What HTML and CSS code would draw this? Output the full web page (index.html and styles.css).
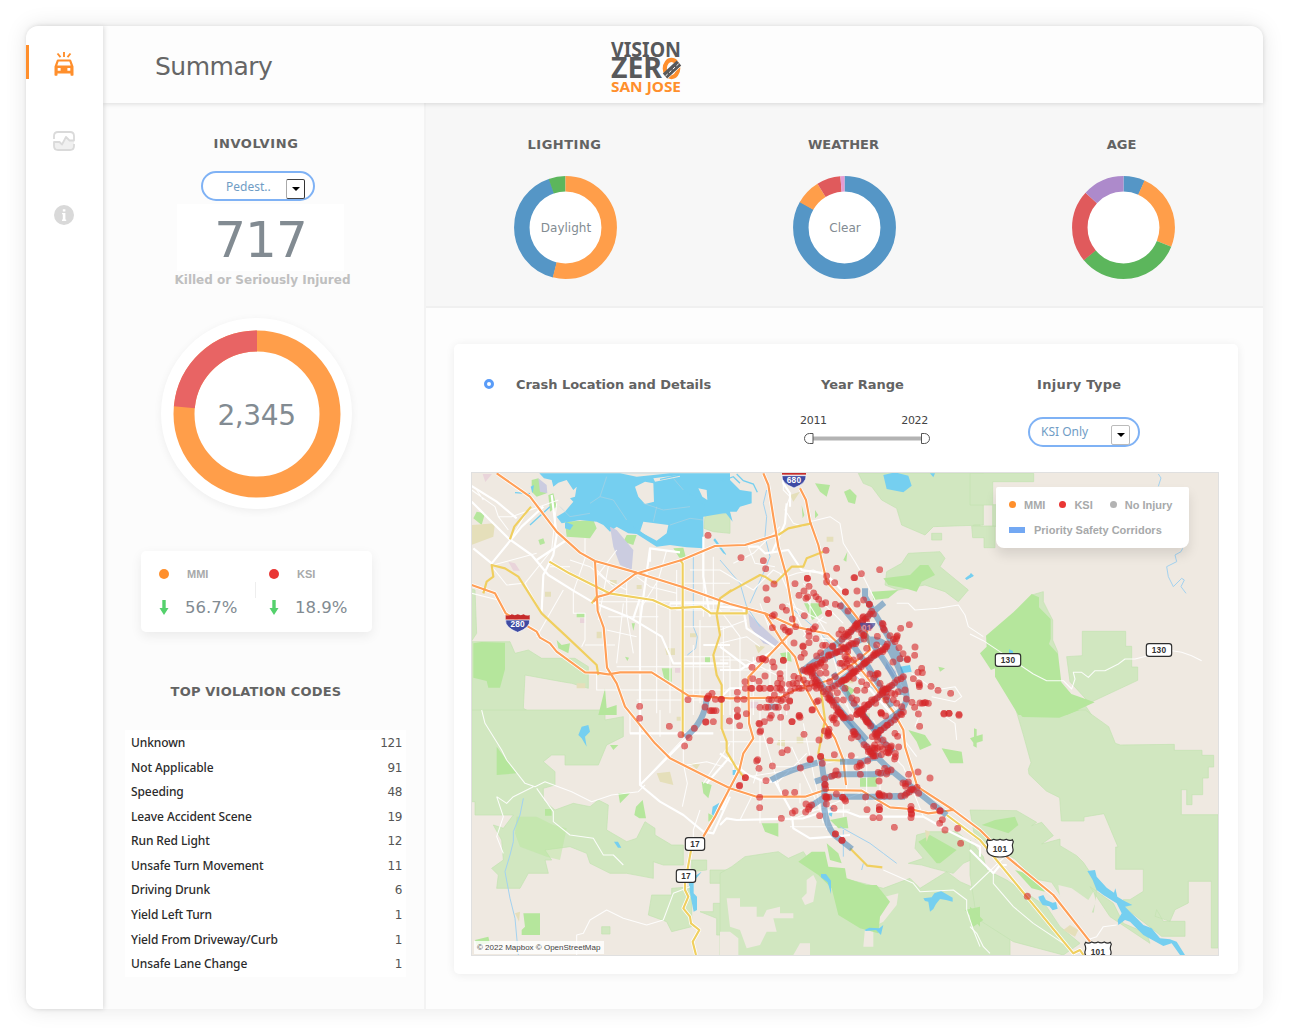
FILE: index.html
```html
<!DOCTYPE html>
<html lang="en">
<head>
<meta charset="utf-8">
<title>Vision Zero San Jose - Summary</title>
<link rel="stylesheet" href="styles.css">
</head>
<body>
<div class="app">
  <nav class="sidebar">
    <a class="nav-item active">
      <svg width="20" height="24" viewBox="0 0 20 24"><g fill="none" stroke="#ff8f2c" stroke-width="1.900"><path d="M10 0v5M3.500 1.500l3 3.600M16.500 1.500l-3 3.600"/></g><path fill="#ff8f2c" fill-rule="evenodd" d="M4 7.500h12q1 0 1.300 1l2.200 6V23q0 .7-.7.700h-1.600q-.7 0-.7-.7v-1.500h-13V23q0 .7-.7.700H1.200q-.7 0-.7-.7v-8.500l2.200-6Q3 7.500 4 7.500zm.6 2-1.300 4h13.400l-1.300-4zM3.700 16v2.800h2.900V16zm9.700 0v2.800h2.900V16z"/></svg>
    </a>
    <a class="nav-item chart">
      <svg width="22" height="20" viewBox="0 0 22 20"><path fill="#f0f0f0" d="M1 11h4.500l3.500 3 4.500-7 2.500 3h5v5q0 4-4 4H5q-4 0-4-4z"/><path fill="none" stroke="#dadada" stroke-width="1.800" stroke-linejoin="round" d="M1 8V5q0-4 4-4h12q4 0 4 4v4.500h-4.500L13 6l-4 7.500L6.500 11H1v4q0 4 4 4h12q4 0 4-4v-2"/></svg>
    </a>
    <a class="nav-item info">
      <svg width="20" height="20" viewBox="0 0 20 20"><circle cx="10" cy="10" r="10" fill="#d9d9d9"/><path fill="#fff" d="M8.800 4.200h2.600v2.300H8.800zM8 8h3.400v6.500h.8V16H8v-1.500h.8V9.300H8z"/></svg>
    </a>
  </nav>
  <div class="main">
    <header class="header">
      <h1>Summary</h1>
      <svg class="logo" width="70" height="52" viewBox="0 0 70 52">
        <g font-family="'Noto Sans',sans-serif" font-weight="700">
          <text x="0" y="16" font-size="20.500" fill="#58595b" textLength="70" lengthAdjust="spacingAndGlyphs">VISION</text>
          <text x="0" y="37" font-size="28" fill="#58595b" textLength="51" lengthAdjust="spacingAndGlyphs">ZER</text>
          <text x="0" y="50.500" font-size="15" fill="#ff8f2c" textLength="70" lengthAdjust="spacingAndGlyphs">SAN JOSE</text>
        </g>
        <ellipse cx="60.500" cy="27.500" rx="6.700" ry="8.600" fill="none" stroke="#ff8f2c" stroke-width="4.200"/>
        <path d="M53 33l14-13M57 37l12-11" stroke="#fff" stroke-width="1"/>
        <path d="M54 35l14-13" stroke="#58595b" stroke-width="6.500"/>
        <path d="M54.500 35l14-13" stroke="#fff" stroke-width="1" stroke-dasharray="3 2"/>
      </svg>
    </header>
    <div class="body">
      <aside class="left">
        <h2 class="involving">INVOLVING</h2>
        <div class="select pedest"><span>Pedest..</span><i class="drop dark"></i></div>
        <div class="big">717</div>
        <div class="sub">Killed or Seriously Injured</div>
        <div class="donut-big">
          <svg width="168" height="168" viewBox="-84 -84 168 168"><g transform="rotate(-90)" fill="none" stroke-width="21"><circle r="73" stroke="#ff9e4a"/><circle r="73" stroke="#e86464" pathLength="100" stroke-dasharray="23.500 76.500" stroke-dashoffset="-76.500"/></g></svg>
          <span>2,345</span>
        </div>
        <div class="rates">
          <div class="rate"><i class="dot mmi"></i><b>MMI</b><svg class="arrow" width="10" height="15" viewBox="0 0 10 15"><path fill="#54d16c" d="M3.300 0h3.400v8H9.500L5 15 .5 8h2.800z"/></svg><span>56.7%</span></div>
          <i class="split"></i>
          <div class="rate"><i class="dot ksi"></i><b>KSI</b><svg class="arrow" width="10" height="15" viewBox="0 0 10 15"><path fill="#54d16c" d="M3.300 0h3.400v8H9.500L5 15 .5 8h2.800z"/></svg><span>18.9%</span></div>
        </div>
        <h2 class="top-codes">TOP VIOLATION CODES</h2>
        <ul class="codes">
          <li><span>Unknown</span><em>121</em></li>
          <li><span>Not Applicable</span><em>91</em></li>
          <li><span>Speeding</span><em>48</em></li>
          <li><span>Leave Accident Scene</span><em>19</em></li>
          <li><span>Run Red Light</span><em>12</em></li>
          <li><span>Unsafe Turn Movement</span><em>11</em></li>
          <li><span>Driving Drunk</span><em>6</em></li>
          <li><span>Yield Left Turn</span><em>1</em></li>
          <li><span>Yield From Driveway/Curb</span><em>1</em></li>
          <li><span>Unsafe Lane Change</span><em>1</em></li>
        </ul>
      </aside>
      <section class="right">
        <div class="factors">
          <div class="factor"><h2 class="lighting">LIGHTING</h2>
            <div class="donut"><svg width="104" height="104" viewBox="-52.500 -52.500 104 104"><circle r="37" fill="#fff"/><g transform="rotate(-90)" fill="none" stroke-width="15.500"><circle r="43.700" stroke="#5596c6" pathLength="100" stroke-dasharray="41 59" stroke-dashoffset="-53.900"/><path d="M41.300-14.200A43.700 43.700 0 0 1 43.700 0" stroke="#5cb65c"/><circle r="43.700" stroke="#ff9e4a" pathLength="100" stroke-dasharray="54 46"/></g></svg><span>Daylight</span></div>
          </div>
          <div class="factor"><h2 class="weather">WEATHER</h2>
            <div class="donut"><svg width="104" height="104" viewBox="-52.500 -52.500 104 104"><circle r="37" fill="#fff"/><g transform="rotate(-90)" fill="none" stroke-width="15.500"><circle r="43.700" stroke="#5596c6" pathLength="100" stroke-dasharray="83.400 16.600"/><circle r="43.700" stroke="#ff9e4a" pathLength="100" stroke-dasharray="8 92" stroke-dashoffset="-83.200"/><circle r="43.700" stroke="#e05a5c" pathLength="100" stroke-dasharray="7.500 92.500" stroke-dashoffset="-91.200"/><circle r="43.700" stroke="#e59bd3" pathLength="100" stroke-dasharray="1.300 98.700" stroke-dashoffset="-98.700"/></g></svg><span>Clear</span></div>
          </div>
          <div class="factor"><h2 class="age">AGE</h2>
            <div class="donut"><svg width="104" height="104" viewBox="-52.500 -52.500 104 104"><circle r="37" fill="#fff"/><g transform="rotate(-90)" fill="none" stroke-width="15.500"><circle r="43.700" stroke="#5596c6" pathLength="100" stroke-dasharray="6.800 93.200"/><circle r="43.700" stroke="#ff9e4a" pathLength="100" stroke-dasharray="24.400 75.600" stroke-dashoffset="-6.700"/><circle r="43.700" stroke="#5cb65c" pathLength="100" stroke-dasharray="33 67" stroke-dashoffset="-31.100"/><circle r="43.700" stroke="#e05a5c" pathLength="100" stroke-dasharray="22.800 77.200" stroke-dashoffset="-64"/><circle r="43.700" stroke="#ad8acb" pathLength="100" stroke-dasharray="13.200 86.800" stroke-dashoffset="-86.800"/></g></svg></div>
          </div>
        </div>
        <div class="card">
          <div class="controls">
            <div class="ctl title"><i class="ring"></i><h3>Crash Location and Details</h3></div>
            <div class="ctl years"><h3>Year Range</h3>
              <div class="range-labels"><span>2011</span><span>2022</span></div>
              <svg width="126" height="12" viewBox="0 0 126 12"><path d="M8 5.500h110" stroke="#b3b3b3" stroke-width="4"/><path d="M9 .5v10H5.500a5 5 0 0 1 0-10zM117.500 .5v10h3a5 5 0 0 0 0-10z" fill="#fff" stroke="#555"/></svg>
            </div>
            <div class="ctl injury"><h3>Injury Type</h3><div class="select ksi-only"><span>KSI Only</span><i class="drop"></i></div></div>
          </div>
          <div class="map">
            <svg width="748" height="484" viewBox="3 6 2244 1452">
              <defs>
                <marker id="crash" markerUnits="userSpaceOnUse" markerWidth="22" markerHeight="22" refX="11" refY="11"><circle cx="11" cy="11" r="10.500" fill="#d62728" fill-opacity=".6"/></marker>
                <g id="shield101"><path d="M-37-25q8 5 18-1 10 5 19 0 10 5 19 0 10 6 18 1l3 6q-5 10-2 18 5 14-9 22-10 6-29 6t-29-6q-14-8-9-22 3-8-2-18z" fill="#fff" stroke="#2c2c2c" stroke-width="3.500"/><text class="route" y="12">101</text></g>
                <g id="box130"><rect x="-38" y="-19" width="76" height="38" rx="8" fill="#fff" stroke="#2c2c2c" stroke-width="3.500"/><text class="route" y="9">130</text></g>
                <g id="box17"><rect x="-29" y="-19" width="58" height="38" rx="8" fill="#fff" stroke="#2c2c2c" stroke-width="3.500"/><text class="route" y="9">17</text></g>
                <path id="freeways" d="M80 10L180 80 260 185 330 248 375 273 500 308 635 350 780 402 885 430 975 470 1075 492 1120 535 1190 620 1270 725 1300 780 1305 830 1330 910 1342 950 1450 1020 1530 1080 1610 1160 1750 1275 1860 1415M375 273L383 423 401 473 411 593 440 640 465 710 555 820 600 865 740 935 780 955 860 980 1005 980 1065 960 1175 962 1260 1012 1320 1017 1375 1030 1450 1020M5 345L75 370 107 430 200 485 210 503 240 520 260 545 345 607 380 608 415 613 450 607 545 607 655 677 780 685 930 683 975 660 1080 630 1150 580 1200 540 1190 480 1120 390 1070 335 1045 225 1020 155 1008 90 990 55M880 10L895 45 910 140 925 230 950 320 975 470M370 395L385 380 415 372 495 312 635 270 735 228 825 225 920 195M960 490L835 622 837 760 850 805 820 850 808 900 750 1010 735 1040 700 1100M885 430L940 520 975 560 1000 640 1050 735 1095 805 1120 870 1128 945"/>
              </defs>
              <rect width="2260" height="1470" fill="#efe9e1"/>
              <g class="park">
                <path d="M5 515h115l15 35 40-10 40 25 100 0 40 25 0 65-50-15-30-5-110-20-5 100 55 30-10 25H5zM0 355l15 5 5 130-20 30zM705 135l75-5v60l-50-5-28-10z"/>
                <g transform="translate(750)"><path d="M415 10l15 30 25 10 30 40 45 25 15 50 70 30 25-25 150-5V10zM760 165h20v35h-20zM635 190h30v20h-30zM500 305l45-25 20-30 95-5 15 20-15 25 85 70-30 35-40-30-60-20-80 15-40-15z"/></g>
                <g transform="translate(1500)"><path d="M0 10v95h68V35h123V10zM5 168h70v65H42v-30H8zM68 104h60v65H68zM290 560l47-3v-73h130v45h18v62h18v40L345 705l20 30H300l55-40-55-60zM185 375l35-10v30l15 30 13 25v60l15 35v60l-40-20z"/></g>
                <g transform="translate(0 720)"><path d="M5 0h400v30l55-10v60l-50 25-25 60H285v-30h-40l-25 20 35 30v40l-35 10v35l35 30 55-20 50 10 25-20 30 15-5 75 60 35 30-10 25-50 30 20v20l50 30 35 0v60h-60l-30-10v50l-80-15-50 0-60-30-10-30-50-20-75 10 20 30-20 0 10 40h-60l-25 45H80l5-40-20-20 35-25-5-60-25-45 30 10 30-40H15v-40H5zM545 555h60v-20l60-5v120l-60 15-15-30-55-20zM690 605h40v-25h50v-60h-60v-40h60v130l-20 20 0 45h-20v-50zM665 450l45 0 0 30-45 5zM395 650h25v22h-25z"/></g>
                <g transform="translate(750 720)"><path d="M0 490l35-20 40-30 100-15 30 20 45-20 40 60 200 50 80-30 30 30 80-50 40 30 80 35 50 20 20 30v160H0zM565 460l45-15-25-30 5-40 40-10 80 0 60 50 5 25-45 20-30 30-60-15-35-10z"/></g>
                <g transform="translate(1500 720)"><path d="M138 0h208l70 50 20 50 15 5 162-2v18h83v15h35v35h-16v33h-17v50h-32v30h-16v-45h-16v75h110v400h-20v-200H655v65l-40 20-15 35-45-15 5-20 20 35h65v45h-70l-25-20-90-70v-20h20l40-25V478H437v-67h7L402 311l-60 10v12h-68l-5-70-40-20-52-50-2-15 8-20-22-80zM0 300l140 2 60 35-15 10 30-10 35 40-35 25 55-15 0 20 50 30 20 20 20 30 20 50-10 70-85-30-40-60-50-10-60-60-70-40-50-20zM0 390l40 50 10 40 60 30 120 80 40 60 60 50-50 35-150-40-110-70-20-130zM360 530l70 50 30 60 70 30 10 30-120-80z"/></g>
              </g>
              <path class="land" transform="translate(750 720)" d="M260 510l20-15 10 20-10 60-25 10-10-20 15-15zM20 565h40v25h50v30h20l10-20 40-10v20l40 0v15h-60l10 40-30 0-20 40-40 10-20-55-30-10zM0 665l30 0 25 20v50H0zM440 600l55-40 40-10-5 35-40 50-30 15v60l-30 0zM240 700h30v35h-50z"/>
              <path class="land" transform="translate(1500 720)" d="M265 525l40 10 50 35 15-25 8 30-20 50-60-20-25-25z"/>
              <g class="meadow">
                <path d="M10 520l25-4 70 2v80l-15 55H55l-5-20-40-10zM185 30l20-5 25 45-30 10-15-15zM235 75l15-5 10 40-20 15zM285 155l85-5 10 25-20 30-70-5zM470 195l30 0-10 30-30-10zM610 235l30-2 8 30-20 0zM260 510l15 15 25-5-5 30-30-15zM320 430h25v12h-25zM575 595h30v40h-20zM385 735l20-80 5 60 30-10v30zM705 560l15 0v22l-15-5zM485 460l10 0-5 22zM20 125l25 5-10 35-25-20zM465 560l12 3-5 10zM205 210l15-5 5 15-15 5z"/>
                <g transform="translate(750)"><path d="M285 40l45 5-10 35-20-15zM372 65l18-8 20 20-5 25-20-5zM490 325l80-10 30-30 25 0 20 30-40 20-15 30-35-10-50-10zM455 365l80-5-30 25-45 5zM370 270l12-25-3 30zM245 105l8 30-5 10zM252 400l45 0 10 30-30 20zM180 550l30-5 5 30-25-5zM370 640l35 20-20 25zM655 590l20 5-15 10zM285 120l10 15-10 10z"/></g>
                <g transform="translate(1500)"><path d="M48 497l82-70 55-55 22 10 0 30 35 35 0 60-5 15 27 30 10 85 30 35 70 25L290 735H145L75 620v-25l-12 5-33-50 20-20z"/></g>
                <g transform="translate(0 720)"><path d="M80 110l60 80-60 5zM160 610h50v65h-55v-15l10-10zM445 250l35 0-30 30zM498 290l20-20 10 55-20 0-15-10zM695 215l30 10-10 40-15-15zM715 310l20 10-20 15zM15 690l40-10 5 20-40 5zM225 297h20v20h-20zM420 105l25 0-15 15z"/><path opacity=".45" d="M140 320l60 0 50 25 40 10-20 95-40-10-80-30-15-40z"/></g>
                <g transform="translate(750 720)"><path d="M235 455l40-30h40l10 45 50 5 5 30 60 20h30l40 50-30 45-5 50-55-15-65-40-20-80-40-40zM420 205l50-5v30h-50zM595 395l35-20 80 45-50 40-10 0zM565 60l50 15 20 30-35 15-10-25zM665 115l60 10 5 35-40 0zM330 330l50-10 5 35-30 0zM320 400l35 30 10 30-35-10zM125 340l50 0v40l-40-15zM735 600l45-10v60z"/></g>
                <g transform="translate(1500 720)"><path d="M138 0h190l-60 23-110-2zM35 345l40-15 60-10 10 25-30 25-60-20zM0 590l40 40-30 20-10-10zM0 85l12-5 0-25 8 3v20l18-5v20l-18 5v15l-10-5 0-10zM135 480l50 15 40 50-40-10z"/></g>
              </g>
              <path class="pink" d="M115 275l20 5 15 22-20 0zM38 12h28l-20 24zM330 445h14v14h-14zM615 594h16v14h-16zM840 695h25v20h-25z"/>
              <path class="sand" d="M5 165l70-5-5 40-65 25zM225 365h18v15h-18zM380 485h15v20h-15zM585 535l30 0 0 20-25 0zM320 640h26v15h-26zM960 75l30-10-20 30zM1070 200h20v15h-20zM925 810h20v20l-25-5zM855 525l30 5-20 20zM1130 620h20v20h-20zM560 910l40-5 10 40-40-10zM660 880l30 3-10 15zM1180 730h20v20h-20zM1365 1080l15 5-10 30zM1780 1380l20-15 25 15-10 20zM135 1330l15-5-3 30zM420 330h20v15h-20zM500 345h15v12h-15zM660 490h20v12h-20zM980 800h20v20h-20zM620 740h20v12h-20z"/>
              <g class="water">
                <path d="M208 10l14 15 23 5 5 20 15-12 25-8 20 30 10-10-5 30-15 5 10 10-25 30-25 15 15 20 55-10 50 5 20 10 20 20 20-15 35 20 25 2 20 13 40 25 40-5 50 7 50 3v-95l60-10 20-2V10zM182 50l10-5-4 25zM285 155l25 10-10 15-15-5z"/>
                <path d="M735 205l35 50-10-5-30-40z"/>
                <g transform="translate(750)"><path d="M0 25l30 5 30 30 35 5v35l-35 10-10 15H30l8 30-20-25H0zM490 15l35-8 40 10 10 30-25 20-50-10zM735 325l20-15 5 8-20 12zM540 590l30-5 5 20-30 5zM630 10h15l-5 12z"/></g>
                <path d="M1617 538l12 5v8l-12 0zM1500 310l12 7-12 7z"/>
                <g transform="translate(0 720)"><path d="M335 50l20-5 5 20-15 15 5 30-15-25-10-10zM432 395l12 0 10 18-10 0zM728 290l20-12-15 40-8-5zM655 510l40-25-24 30 0 35 10 10 0 40-10 5-10-50zM625 500l10 5-5 10z"/></g>
                <g transform="translate(750 720)"><path d="M303 492l15 0 15 20 0 40-10-35-20-15zM433 660l15-7 30 2 12-10-5 20-2 10-15-15-30 3zM610 565l25-3 8-12 20-7 35 20 0 12-20-5-18-3-12 15-8 15-10 8-5-30-10-2zM330 290l10 5-5 25-8-5zM38 180h15v15h-15z"/></g>
                <g transform="translate(1500 720)"><path d="M352 483l23-3 5 20 30 33 22 15 4-13 6 25 20 12 25 13-22 5 15 15 20 20 20 20 25 10 25 30 30 3 20 7 25 40h-15l-25-35-25 8-60-33-40-40-15-5-20 15-2-15 12-20-15-30-40-25-20-15-12-30zM205 560l15-5 8 15 20 8 10-2 5 20-15 5-10-12-20-4-10-15z"/></g>
              </g>
              <path class="land" d="M495 50l30-15 25 5 2 55-27 7-20-22zM520 155l75 10-5 25-30 22-50-27zM450 10l50 10 100-10zM550 25l80-10 0 5-75 15zM685 55l25 5 2 30-15-10z"/>
              <path d="M420 170l20 10 50 60-5 60-35-15-20-55zM205 25l25 20 2 25-22-5zM835 430l95 90-15 10-35-10-40-50zM1250 575l30 30-10 20-25-30z" fill="#cbcce0"/>
              <path d="M570 28l60-13M705 130l-5-30-60-40M530 200l-40-30M460 150l-8-25M135 68l45 3M180 165l60-55M750 35l40-15 20 20M800 12l20 20 30 10 12 25" fill="none" stroke="#75cff0" stroke-width="4"/>
              <path d="M360 100l30-20 40 10 40 60M520 100l60 20 80-10M640 60l-30-35M560 110l-10 45M600 165l60-20 40 5M390 80l20-60M270 110l30 30 60-10" fill="none" stroke="#bfd3dc" stroke-width="1.500"/>
              <g class="creek">
                <path d="M670 260v210l12 30-5 35-25 20M890 60l-10 40 10 40-5 60 15 60-20 50-40 90M750 270l60 70 20 70 40 60"/>
                <path d="M160 985l-10 50-20 50 0 30-10 40-15 50 15 80 15 60 10 110M1110 1070l90 50 40 30 40 30M1120 1080v80M1180 1180l-5 20M960 410l70 60 50 50 20 60 130 90M2065 12l8 12-8 25M2138 235l-5 10-18 10 5 20-30 15 5 30 15 30 25-25 8 5-10 20 15 20"/>
              </g>
              <g class="minor">
                <path d="M5 60l70 50M75 110l10 30 40 0 140-50M85 140l30 40M70 285l130-35M120 210l60-100M260 100l-15 140-80 100 50 90M345 205v60l-35 100v65h35v80l-10 20M380 300l30 30 60 30v40M415 290l-30 160M470 330v100l20 120M500 320l40 30 80 20M380 395h400M590 240l-25 90-50 80M345 525h90M380 600v60h400M440 590h340M500 690h280M415 440h150M460 400l-20 180M510 400v60M560 330v400M600 400v330M620 300v120h160M670 525v210M700 240v200M730 260v160M750 300h-90M640 340h140M640 470h150M690 450v250M760 470v265M640 560h140M410 480l90 20M440 240l-60 80M300 270l60 20 70 60M240 290l60 0M20 60l20 30M5 370l80 20M200 500l80-140M160 340l-50 5-40-50"/>
                <g transform="translate(750)"><path d="M190 10v50l20 20-15 40 25 40 30 10M85 230l20 50 60 10M0 300l100 60 60-60 40 20 30-10 50-10 60 30M180 170l-80 80-60 30M270 155l60-15 30 20 10 60 35 55 20 35 40 80M0 520l80-20 40 30M0 570h80l100 50M30 560v175M60 500v235M120 400l30 80M80 650h170M0 600h200M100 560v175M150 560v175M200 500v235M0 480l80-30M0 420l60 80M230 440l30 60 100 10M260 390l60 100M270 300v150M310 440l-60 60M200 400l120 60M250 340l120 120M330 530l60 200M430 570l110 165M480 540l100 165M300 600l100 135M530 400l35 0 20 20 70-5 60-10 20 30 10 35 45 30M575 610l70 50 60-10 20 30-20 15-70-15M180 310l60 130M290 460l30 80"/></g>
                <path d="M1500 492l40 20 90 60 60 40 40 20 50 0 25 25 10-30-5-20 25 0 20 15 20-20h30l40-20 20-15 30 0 60-15 20-15 60 10 30 10 30 15"/>
                <g transform="translate(0 720)"><path d="M35 0l10 40 50 80 15 30 55 70 30 10 30-15 80 30 60 30 60-20 80-10 20-20M200 235l50 70 0 30 50 40 70 10 30 50 30 0 30 30M510 225l150-160M480 0v70h150M570 0v80M640 100l0 60 12 60-15 70M650 165l60-10 50 15M780 100l-80 120M690 300l-20 60 0 60M780 230l-30 70-30 60M660 530l-50 20-30 80-50 15-70-20-50-25-50 30-20 40-20 5 0 60M80 260l30 20 20-20 60-30M80 260l20 60-20 60 20 50"/></g>
                <g transform="translate(750 720)"><path d="M40 0v180M120 0v160l-20 60M182 0v120M0 60h85M0 95h300M85 200l130-20 200-40M215 110l90 200M120 210v130M60 330l40-80M250 40l60 300M210 330l210-80M240 220v60M320 240v120M370 240v80M260 130l-90 90M380 140v100M440 120v160M480 220v110M420 80l30 50M500 120l50 50 60 150M530 60l60 80M120 40l60 200M490 480l90 40 20 25 100-5 40 30 0 30 20 60 20 50M605 0l-20 50M660 0l15 20 30 20 5 50M460 30l30 60 50 70M150 170h80M210 350h140M240 300h150"/></g>
                <g transform="translate(1500 720)"><path d="M0 540l115-110M70 490l0 30 60 70 60 50 90 60M350 690l30-10 20-30 40-5M0 650l20 20 20 40 20 20"/></g>
              </g>
              <g class="major">
                <path d="M5 95l60 60 50 50 70 50 50 60 80 50 60 35 100 40 100 60 35 80h165M10 235l55 45 90-110 65-60M245 75l15 120-10 60-30 60-5 110M510 735V455l30-220 90 12M540 235v40M700 525h80M700 200v120l20 120M600 400h160M510 385l-20 60M200 270l90-60M0 45l80 50 60 50"/>
                <g transform="translate(750)"><path d="M85 230l30 0 20 20 70-10 40 60 70 10 50 50M0 600h60l30-20M0 410l70 5 10 60 90 60M200 100l-5 60-40 90M0 685l30-30h200M210 110l0-40-20-30V10M180 530l-100 60-80-60M400 600l130 150"/></g>
                <g transform="translate(0 720)"><path d="M510 0v225l60 50 70 40 60 50 30 5 50-110M480 70h170l80 0M510 225l140-140M780 140l-70 80"/></g>
                <g transform="translate(750 720)"><path d="M0 345l20-20 30 5 200-5 60-20 70 0 40 15 100 0 90 0 70 40 100 50v30M0 130l85 65 50 20h30l50 90 5 50 50 30 70-5 50-5M5 300l60-150"/></g>
                <g transform="translate(1500 720)"><path d="M0 420l30 30 40 40 20-25 20 0"/></g>
              </g>
              <g class="casing">
                <use href="#freeways"/>
                <path d="M1430 1035L1530 1110 1810 1450 1830 1440 1840 1455M630 270l8 10V800M665 1130l-20 110 0 20 10 20-15 35 20 25 3 20 25 20-20 35 10 40M238 275l60 35 120 60 130 20 55 25 90-5 30 20h95"/>
              </g>
              <g class="highway yellow">
                <path d="M183 110l-50 60-13 38M238 275l60 35 120 60 130 20 55 25 90-5 30 20h95M40 370l10-35 20-15-5-35 40 10 40 25 70 110 75 70 90 85 5 30M630 270l8 10V800M365 400l15-20M785 360l-35 25-10 50 10 60-20 60 10 60 15 30v130l15 40 0 30 30 50 25 30M750 430h80v-20M750 385l30-20 90-50 15 5 30 20 50-50h35l10-25 50-20M925 195l30-20 70-15M1050 640l15 110-20 100 20 20 60 2M665 1130l-20 110 0 20 10 20-15 35 20 25 3 20 25 20-20 35 10 40M1140 1135l52 52 45 5M1430 1035L1530 1110 1810 1450 1830 1440 1840 1455"/>
              </g>
              <g class="highway"><use href="#freeways"/></g>
              <g class="corridor">
                <path d="M710 685q-5 70-65 118"/>
                <g transform="translate(750)"><path d="M435 355l0 25 70 120 40 75M493 398l-60 50-60 55-120 95M358 400l110 135 40 60 40 70 0 10M500 530L330 655M555 615L410 735M280 610l80 110 80 90M340 610l60 90 50 60 30 30M395 520l50 70 70 120M440 510q55-10 80 50 40 80 40 130-20 55-90 100M240 605l190-100M145 710h30"/></g>
                <g transform="translate(750 720)"><path d="M350 0l90 110 60 60 80 65 100 80M420 0l60 85 40 40M545 0l-80 60M153 210q50-30 140-52M303 145l10 70v80q5 50 30 80l53 42M285 215l65-22 110 0 60-8M270 290l45-30h240M360 155h65l60-20M460 260l90-3 30-20"/></g>
              </g>
              <g class="crashes">
                <polyline points="714,196 509,709 654,689 711,686 712,684 716,678 726,670 736,688 753,688 705,711 720,722 731,722 738,722 509,745 598,769 633,794 657,803 644,828 673,775 707,756 708,756 730,755 725,722"/>
                <g transform="translate(750)">
                <polyline points="63,263 130,272 137,296 318,241 350,295 424,311 402,323 404,323 479,299 225,341 262,325 262,325 320,318 320,336 344,338 376,366 376,366 411,363 411,402 431,390 448,403 448,403 138,354 162,342 141,389 267,349 252,363 237,376 258,385 263,381 281,369 288,380 296,388 306,402 317,398 346,403 361,408 384,423 326,430 326,430 253,437 187,411 199,421 217,447 163,434 157,438 157,473 190,472 196,480 205,486 209,484 222,519 227,470 286,470 280,477 267,484 267,498 288,506 267,518 249,528 249,530 253,550 243,562 308,526 317,526 337,528 338,530 302,548 290,558 326,555"/>
                <polyline points="365,480 357,492 372,500 380,495 385,487 366,508 395,480 401,475 408,465 413,470 420,460 415,478 425,490 432,497 430,440 436,447 443,440 450,432 455,424 460,432 428,452 440,456 405,468 411,462 376,492 385,499 392,486 431,495 440,475 448,470 428,443 413,459 489,463 487,460 493,480 490,475 472,499 510,497 520,508 530,500 532,497 542,475 568,464 502,522 497,530 525,515 585,531 584,556 537,533 549,551 562,569 562,567 540,566 519,576 488,545 529,506"/>
                <polyline points="250,600 256,603 263,598 268,591 274,600 279,606 281,587 285,594 291,583 296,589 302,577 307,570 314,569 302,580 326,558 333,554 345,549 351,544 360,545 370,536 378,537 386,526 394,520 399,522 410,514 407,521 432,507 350,547 374,533 386,530 270,604 262,606 275,610 277,619 283,625 289,631 294,638 300,646 304,655 310,665 318,672 324,684 330,690 337,697 341,706 349,713 354,719 360,727 334,691 328,686 284,649 290,655 275,640 286,637 290,643 268,596 272,599 277,590"/>
                <polyline points="500,530 494,538 488,539 480,544 474,548 469,553 462,557 454,563 448,570 441,573 435,580 430,583 424,590 416,596 408,604 400,607 393,612 388,619 381,626 373,631 365,636 356,641 346,648 336,655 325,657 466,549 461,554 433,579 397,610 404,603 386,621 377,629 365,633 438,576 402,608 371,630 550,620 543,626 532,630 524,638 515,646 508,650 500,656 494,660 488,667 480,674 472,683 464,688 455,696 447,703 440,710 432,716 424,722 417,728 411,733 496,658 490,656 486,662 504,656 498,667 488,670 445,704 421,723 425,718 430,721"/>
                <polyline points="375,560 380,567 385,572 366,580 380,580 374,590 360,580 400,570 365,530 383,545 440,535 420,560 470,525 391,593 315,590 318,609 300,610 329,635 345,620 400,625 411,661 434,661 425,635 440,645 450,612 474,612 472,610 466,615 461,625 480,640 455,690 396,684 402,700 410,690 434,705 467,700 483,728 375,655 350,690 370,690 330,675 352,668 295,692 290,695 277,719 250,630 235,625 222,619 230,640 225,655 260,640 245,655 219,640 237,655 266,655 208,643 186,642 180,611 181,625 209,694 209,692 190,688 163,675 150,655 152,655 180,655 185,660 199,675 212,663 190,571 190,571 127,566 129,566 137,570 158,576 162,591 96,592 118,568 135,618 117,634 98,626 75,635 76,655 96,655 93,655 118,655 120,655 132,655 52,667 52,688 72,688 5,688 52,720 120,712 137,712 145,712 147,688 174,688 175,712 200,712 183,692 173,640 170,655 155,690 166,712"/>
                <polyline points="605,595 607,608 580,626 597,639 598,645 598,650 633,649 654,661 692,670 594,607 559,687 576,697 584,712 600,699 608,700 613,698 617,698 625,700 672,730 687,730 717,733 555,660 520,690 525,672 535,665 530,700 545,710 500,680 515,670 498,690"/>
                </g>
                <g transform="translate(750 720)">
                <polyline points="28,33 52,20 53,18 59,47 79,11 117,40 119,42 122,62 120,66 133,35 150,24 154,16 182,22 216,35 216,35 237,18 240,22 238,16 276,0 252,73 150,92 202,120 186,128 113,149 110,153 117,175 157,168 138,212 76,203 76,203 58,228 59,226 241,174 270,147 271,149 302,139 302,140 307,160 297,90 313,63 325,65 327,75 324,70 327,58 323,78 343,134 394,137 394,84 336,23 343,25 349,40 340,30"/>
                <polyline points="355,5 363,12 369,20 350,13 375,23 392,23 410,13 413,2 418,5 424,12 430,20 436,27 440,35 446,40 452,48 438,30 443,36 425,6 428,15 367,16 371,24 361,9 399,65 406,71 403,74 413,80 402,65 432,104 440,110 446,118 451,124 457,130 461,137 466,138 453,130 465,120 472,115 458,113 464,105 480,110 489,90 488,117 498,105 505,115 512,112 505,127 509,121 514,108 526,130 526,140 524,147 536,111 459,139 445,125 484,134 463,115 500,127 506,129"/>
                <polyline points="550,6 542,12 530,20 524,30 512,38 500,46 493,53 483,60 472,70 465,72 470,80 475,70 468,67 483,8 485,12 497,18 595,12 599,49 525,70 533,79 672,12 687,10 717,16 457,80 473,90 545,14 481,61 503,45 471,75 443,153 421,160 418,168 411,171 424,165 494,175 503,183 513,180 500,192 482,190 475,187 477,213 421,193 354,195 348,183 344,195 335,199 314,206 315,223 315,225 317,236 319,260 319,262 320,265 326,262 315,260 319,282 342,295 349,252 368,262 368,262 374,268 377,273 437,261 477,250 478,255 480,258 487,255 477,253 494,258 508,258 543,258 555,256 560,250 568,246 576,237 580,240 591,232 596,250 594,186 566,193 630,204 549,219 556,222 565,216 557,229"/>
                <polyline points="119,262 119,293 196,248 224,247 258,282 268,291 265,298 275,285 257,306 225,303 217,309 184,325 299,317 441,299 478,299 478,299 478,290 478,323 459,323 573,289 573,299 574,310 575,313 573,323 573,300 523,352 641,289 660,302 660,303 667,329 659,340 675,360 713,355 722,400 346,372 346,372 366,391 366,391 573,239"/>
                </g>
                <circle cx="1672" cy="1279" r="10.500" fill="#d62728" fill-opacity=".6"/>
              </g>
              <g class="shields">
                <g transform="translate(143 459)"><path d="M-36-24q10 4 18-2 10 5 18 0 10 5 18 0 8 6 18 2v14h-72z" fill="#c62b2b"/><path d="M-36-9h72q3 22-36 37-39-15-36-37z" fill="#3f4ba3" stroke="#fff" stroke-width="2"/><text class="route light" y="12">280</text></g>
                <g transform="translate(972 28)"><path d="M-36-22h72v8h-72z" fill="#c62b2b"/><path d="M-36-11h72q3 22-36 37-39-15-36-37z" fill="#3f4ba3" stroke="#fff" stroke-width="2"/><text class="route light" y="11">680</text></g>
                <g transform="translate(1190 470)"><path d="M-20-12h46q2 12-23 24-25-12-23-24z" fill="#3f4ba3" opacity=".7"/><path d="M-2-13h29" stroke="#fff" stroke-width="3"/><text class="route faint" y="12">01</text></g>
                <use href="#box130" transform="translate(1614 570)"/><use href="#box130" transform="translate(2067 540)"/>
                <use href="#box17" transform="translate(675 1122)"/><use href="#box17" transform="translate(648 1218)"/>
                <use href="#shield101" transform="translate(1590 1134)"/><use href="#shield101" transform="translate(1884 1442)"/>
              </g>
            </svg>
            <div class="legend">
              <div><i class="dot mmi"></i><b>MMI</b><i class="dot ksi"></i><b>KSI</b><i class="dot none"></i><b>No Injury</b></div>
              <div><i class="bar"></i><b class="psc">Priority Safety Corridors</b></div>
            </div>
            <div class="credit">© 2022 Mapbox © OpenStreetMap</div>
          </div>
        </div>
      </section>
    </div>
  </div>
</div>
</body>
</html>
```

FILE: styles.css
```css
* { box-sizing: border-box; }
body { margin: 0; padding: 26px; background: #fff; font-family: "DejaVu Sans", Verdana, sans-serif; color: #636363; width: 1291px; height: 1035px; overflow: hidden; }
h1, h2, h3, ul { margin: 0; padding: 0; }
svg { display: block; }
.app { display: flex; width: 1237px; height: 983px; border-radius: 12px; background: #fcfcfc; box-shadow: 0 0 22px rgba(0,0,0,.1); }
.sidebar { width: 77px; background: #fff; border-radius: 12px 0 0 12px; box-shadow: 1px 0 5px rgba(0,0,0,.14); padding-top: 19px; z-index: 1; }
.nav-item { display: flex; justify-content: center; align-items: center; height: 34px; border-left: 3px solid transparent; padding-right: 4px; }
.nav-item.active { border-color: #ff8f2c; }
.nav-item.active svg { margin-top: 3px; }
.nav-item.chart { margin-top: 45px; }
.nav-item.info { margin-top: 40px; }
.nav-item.chart svg { margin-top: -1px; }
.main { flex: 1; display: flex; flex-direction: column; }
.header { height: 77px; display: flex; background: #fdfdfd; border-radius: 0 12px 0 0; box-shadow: 0 1px 5px rgba(0,0,0,.13); position: relative; }
h1 { width: 508px; padding: 25px 0 0 52px; font-size: 25px; line-height: 32px; font-weight: 400; color: #666; letter-spacing: -.5px; }
.logo { margin-top: 15px; overflow: visible; }
.body { flex: 1; display: flex; }
.left { width: 323px; padding-top: 30px; border-right: 2px solid #f3f3f3; }
h2 { height: 20px; font-size: 13px; line-height: 22px; font-weight: 700; color: #636363; text-align: center; white-space: nowrap; }
.involving { width: 306px; letter-spacing: .6px; }
.select { display: flex; height: 30px; width: 114px; border: 2px solid #7fb2f5; border-radius: 15px; color: #6f9cc5; font: 12px/27px "Noto Sans", sans-serif; background: #fff; }
.pedest { margin: 18px 0 0 98px; padding-left: 23px; }
.pedest span { width: 60px; }
.drop { width: 19px; height: 20px; margin-top: 6px; border: 1px solid #bbb; border-radius: 2px; background: #fff; display: flex; align-items: center; justify-content: center; }
.drop.dark { border-color: #444 #333 #444 #aaa; }
.drop::after { content: ""; border: 4px solid transparent; border-top-color: #000; border-bottom: 0; }
.big { width: 167px; height: 67px; margin: 3px 0 0 74px; background: #fff; font-size: 50px; line-height: 73px; color: #828b92; text-align: center; letter-spacing: -1px; }
.sub { width: 319px; margin-top: 1px; text-align: center; font: bold 12px/16px "DejaVu Sans", sans-serif; color: #bfbfbf; white-space: nowrap; }
.donut-big { width: 191px; height: 191px; margin: 30px 0 0 58px; border-radius: 50%; background: #fff; box-shadow: 0 2px 9px rgba(0,0,0,.06); display: grid; place-items: center; }
.donut-big > * { grid-area: 1/1; }
.donut-big span { font-size: 28px; color: #828b92; letter-spacing: -.4px; padding-top: 3px; }
.rates { display: flex; width: 231px; height: 81px; margin: 42px 0 0 38px; background: #fff; border-radius: 5px; box-shadow: 0 4px 12px rgba(0,0,0,.07); }
.rate { width: 110px; display: grid; grid-template-columns: 28px 1fr; grid-template-rows: 30px 37px; padding: 8px 0 0 18px; align-items: center; }
.dot { display: block; flex: none; width: 10px; height: 10px; border-radius: 50%; }
.mmi { background: #ff8f2c; } .ksi { background: #e93634; } .none { background: #b3b3b3; }
.rate b { font: bold 11px "Liberation Sans", sans-serif; color: #a7a9aa; }
.rate span { font-size: 16.500px; color: #828b92; margin-left: -2px; }
.split { width: 1px; height: 16px; background: #eee; margin-top: 31px; margin-left: 4px; margin-right: -5px; }
.top-codes { width: 306px; margin-top: 49px; letter-spacing: .2px; }
.codes { list-style: none; width: 281px; margin: 29px 0 0 22px; background: #fff; padding: 1px 4px 0 6px; }
.codes li { display: flex; justify-content: space-between; height: 24.580px; line-height: 24.580px; font-family: "Noto Sans", sans-serif; font-size: 12px; font-weight: 500; color: #2b2b2b; letter-spacing: -.1px; }
.codes em { font: normal 12px/24.580px "DejaVu Sans", sans-serif; color: #555; letter-spacing: -.4px; }
.right { flex: 1; background: #fdfdfd; border-radius: 0 0 12px 0; }
.factors { display: flex; height: 205px; background: #f7f7f7; border-bottom: 2px solid #f0f0f0; }
.factor { width: 279px; padding-top: 31px; }
.factor h2 { width: 277px; }
.factor .lighting { letter-spacing: .5px; }
.factor .age { width: 275px; }
.donut { width: 104px; height: 104px; margin: 21px 0 0 87px; display: grid; place-items: center; }
.donut > * { grid-area: 1/1; }
.donut span { font-size: 12px; color: #828b92; padding: 2px 0 0 2px; }
.card { width: 784px; height: 630px; margin: 36px 0 0 28px; background: #fff; border-radius: 5px; box-shadow: 0 1px 10px rgba(0,0,0,.07); padding-left: 17px; }
.controls { display: flex; height: 128px; padding-top: 30px; }
h3 { height: 20px; font: bold 13px/21px "DejaVu Sans", sans-serif; color: #636363; white-space: nowrap; }
.title { display: flex; width: 329px; padding-left: 13px; }
.title h3 { letter-spacing: -.05px; }
.ring { width: 10px; height: 10px; border: 3px solid #5a9cf8; border-radius: 50%; margin: 5px 22px 0 0; }
.years { width: 228px; }
.years h3 { padding-left: 21px; }
.range-labels { display: flex; justify-content: space-between; width: 128px; margin-top: 19px; font-size: 11px; line-height: 16px; color: #444; letter-spacing: -.3px; }
.years svg { margin: 4px 0 0 4px; }
.injury h3 { padding-left: 9px; letter-spacing: .3px; }
.ksi-only { width: 112px; margin-top: 23px; padding-left: 11px; }
.ksi-only span { width: 70px; line-height: 25px; }
.map { position: relative; width: 748px; height: 484px; border: 1px solid #e0e0e0; overflow: hidden; }
.map > svg { margin: -1px; }
.park { fill: #d1e7c0; stroke: #c3e3b0; stroke-width: 2; }
.meadow { fill: #b5e69c; }
.water { fill: #75cff0; }
.land { fill: #efe9e1; }
.pink { fill: #e9d4da; }
.sand { fill: #e5dfba; }
.creek, .minor, .major, .casing, .highway, .corridor { fill: none; stroke-linejoin: round; }
.creek { stroke: #a3d2f0; stroke-width: 3; }
.minor { stroke: #fff; stroke-width: 3.200; stroke-opacity: .9; }
.major { stroke: #fff; stroke-width: 6.500; }
.casing { stroke: #fff; stroke-width: 11; }
.highway { stroke: #ff9f57; stroke-width: 6.500; }
.highway.yellow { stroke: #f0cf5f; }
.corridor { stroke: #4684b8; stroke-width: 18; stroke-opacity: .55; }
.crashes { fill: none; }
.crashes polyline { marker: url(#crash); }
.route { font: bold 25px "Liberation Sans", sans-serif; text-anchor: middle; fill: #333; letter-spacing: .5px; }
.route.light { fill: #fff; }
.route.faint { fill: #e58b91; }
.legend { position: absolute; left: 524px; top: 14px; width: 193px; height: 61px; background: #fff; border-radius: 2px 2px 8px 8px; box-shadow: 0 7px 12px rgba(0,0,0,.1); padding: 5px 0 0 13px; }
.legend div { display: flex; align-items: center; height: 25px; }
.legend .dot { width: 7px; height: 7px; margin-right: 8px; }
.legend b { font: bold 11px "Liberation Sans", sans-serif; color: #a7a9aa; margin-right: 14px; white-space: nowrap; }
.legend b + .none { margin-left: 3px; }
.legend .psc { margin: 0; }
.bar { width: 16px; height: 6px; background: #73a8f3; margin-right: 9px; }
.credit { position: absolute; left: 2px; bottom: 1px; height: 13px; padding: 0 4px 0 3px; background: rgba(255,255,255,.8); font: 8px/13px "Liberation Sans", sans-serif; color: #444; white-space: nowrap; }
```
